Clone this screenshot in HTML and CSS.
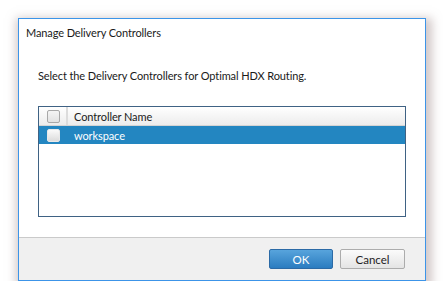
FILE: index.html
```html
<!doctype html>
<html lang="en">
  <head>
    <meta charset="UTF-8" />
    <meta name="viewport" content="width=device-width, initial-scale=1.0" />
    <title>Manage Delivery Controllers</title>
    <link rel="stylesheet" href="styles.css">
  </head>
  <body>
    <div class="dialog">
      <div class="dialog-title">Manage Delivery Controllers</div>
      <div class="dialog-body">
        <div class="hint">Select the Delivery Controllers for Optimal HDX Routing.</div>
        <div class="list">
          <div class="list-header">
            <div class="cell-check"><span class="check"></span></div>
            <div class="cell-name">Controller Name</div>
          </div>
          <div class="list-row selected">
            <div class="cell-check"><span class="check"></span></div>
            <div class="cell-name">workspace</div>
          </div>
        </div>
      </div>
      <div class="dialog-footer">
        <button class="btn btn-primary">OK</button>
        <button class="btn">Cancel</button>
      </div>
    </div>
  </body>
</html>
```

FILE: styles.css
```css
* {
  margin: 0;
  padding: 0;
  box-sizing: border-box;
}
body {
  background: #fff;
  font-family: Lato, "Open Sans", sans-serif;
  font-size: 11px;
  letter-spacing: -0.1px;
  color: #1a1a1a;
}
.dialog {
  margin: 18px 0 0 18px;
  width: 408px;
  height: 263px;
  border: 1px solid #3c94e8;
  background: #fff;
  display: flex;
  flex-direction: column;
  box-shadow: 2px 4px 9px 4px rgba(165, 145, 145, 0.5);
}
.dialog-title {
  padding: 5px 7px 0;
  line-height: 18px;
  height: 48px;
}
.hint {
  line-height: 18px;
  margin-bottom: 21px;
}
.dialog-body {
  padding: 0 19px;
  flex: 1;
}
.list {
  height: 111px;
  border: 1px solid #3f6284;
  background: #fff;
}
.list-header,
.list-row {
  display: flex;
  align-items: center;
  height: 18px;
}
.list-header {
  background: linear-gradient(#ffffff, #ececec);
  border-bottom: 1px solid #d4d4d4;
  height: 19px;
}
.cell-check {
  width: 29px;
  height: 100%;
  display: flex;
  align-items: center;
  padding-left: 8px;
}
.list-header .cell-check {
  border-right: 2px solid #dcdcdc;
}
.cell-name {
  padding-left: 6px;
}
.list-header .cell-name {
  flex: 1;
}
.check {
  display: inline-block;
  width: 13px;
  height: 13px;
  border: 1px solid #a8a8a8;
  border-radius: 2px;
  background: linear-gradient(#f4f4f4, #e2e2e2);
}
.list-row.selected {
  background: #2386c1;
  color: #fff;
}
.list-row .check {
  background: linear-gradient(#fafafa, #dcdcdc);
  border-color: #e8e8e8;
}
.list-row .cell-name {
  padding-left: 6px;
}
.dialog-footer {
  height: 43px;
  border-top: 1px solid #cacaca;
  background: #f0f0f0;
  display: flex;
  justify-content: flex-end;
  align-items: flex-start;
  gap: 7px;
  padding: 11px 20px 0 0;
}
.btn {
  width: 65px;
  height: 20px;
  font-family: inherit;
  font-size: 11.5px;
  color: #222;
  border: 1px solid #acacac;
  border-radius: 2px;
  background: linear-gradient(#fbfbfb, #e4e4e4);
}
.btn-primary {
  width: 64px;
  color: #fff;
  border-color: #2b6aa6;
  background: linear-gradient(#58a4dc, #2b7cc0);
}
```
